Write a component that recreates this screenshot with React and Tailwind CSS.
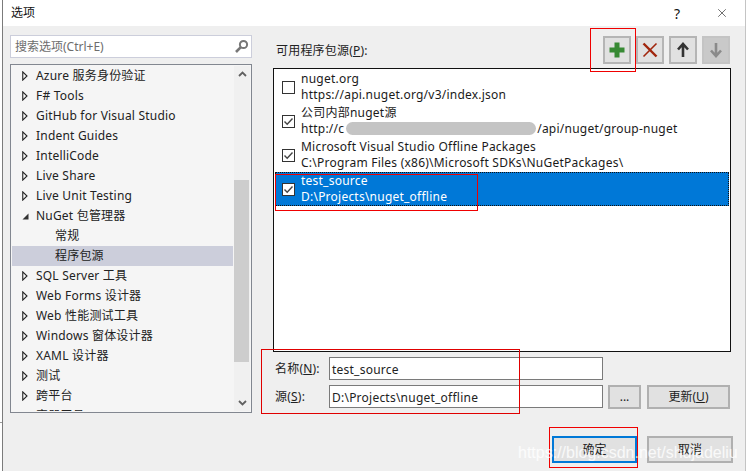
import { X } from "lucide-react";

const font = { fontFamily: '"Noto Sans", "Noto Sans CJK SC", sans-serif' };

const treeItems = [
  { label: "Azure 服务身份验证" },
  { label: "F# Tools" },
  { label: "GitHub for Visual Studio" },
  { label: "Indent Guides" },
  { label: "IntelliCode" },
  { label: "Live Share" },
  { label: "Live Unit Testing" },
  { label: "NuGet 包管理器", open: true },
  { label: "常规", child: true },
  { label: "程序包源", child: true, selected: true },
  { label: "SQL Server 工具" },
  { label: "Web Forms 设计器" },
  { label: "Web 性能测试工具" },
  { label: "Windows 窗体设计器" },
  { label: "XAML 设计器" },
  { label: "测试" },
  { label: "跨平台" },
  { label: "容器工具", open: true },
];

const sources = [
  { name: "nuget.org", url: "https://api.nuget.org/v3/index.json", checked: false },
  { name: "公司内部nuget源", url: "http://c", urlEnd: "/api/nuget/group-nuget", checked: true },
  { name: "Microsoft Visual Studio Offline Packages", url: "C:\\Program Files (x86)\\Microsoft SDKs\\NuGetPackages\\", checked: true },
  { name: "test_source", url: "D:\\Projects\\nuget_offline", checked: true, selected: true },
];

function Arrow({ open }) {
  if (open) {
    return (
      <svg width="7" height="7" viewBox="0 0 7 7" className="shrink-0">
        <path d="M0.5 6.5H6.5V0.5Z" fill="#333" />
      </svg>
    );
  }
  return (
    <svg width="6" height="10" viewBox="0 0 6 10" className="shrink-0">
      <path d="M0.75 0.9L5 5L0.75 9.1Z" fill="none" stroke="#222" strokeWidth="1.1" />
    </svg>
  );
}

function TreeRow({ item }) {
  return (
    <div className={`flex h-5 items-center shrink-0 text-[12px] text-[#222] tracking-[0.2px] ${item.selected ? "bg-[#ccceDB]" : ""} ${item.child ? "pl-[43px]" : "pl-[10px]"}`}>
      {!item.child && <div className="w-[14px] flex items-center"><Arrow open={item.open} /></div>}
      <span className="whitespace-nowrap">{item.label}</span>
    </div>
  );
}

function Check({ checked }) {
  return (
    <div className="w-[13px] h-[13px] border border-[#333] bg-white flex items-center justify-center shrink-0">
      {checked && (
        <svg width="11" height="11" viewBox="0 0 11 11">
          <path d="M1.5 5.5L4.2 8.3L9.5 2.5" fill="none" stroke="#444" strokeWidth="1.4" />
        </svg>
      )}
    </div>
  );
}

function SourceRow({ s }) {
  return (
    <div className={`relative flex items-center h-[34px] pl-[7px] ${s.selected ? "bg-[#0078d7] text-white outline-1 outline-dotted outline-offset-[-1px] outline-[#111]" : "text-[#1a1a1a]"}`}>
      <Check checked={s.checked} />
      <div className="ml-[6px] text-[12px] leading-[16px] tracking-[0.23px] whitespace-nowrap">
        <div>{s.name}</div>
        <div className="flex">
          <span>{s.url}</span>
          {s.urlEnd && (
            <>
              <span className="relative w-[193px] shrink-0">
                <span className="absolute left-[2px] right-[1px] top-[1px] h-[13px] rounded-full bg-[#c4c4c4]" />
              </span>
              <span>{s.urlEnd}</span>
            </>
          )}
        </div>
      </div>
    </div>
  );
}

function IconBtn({ children, disabled }) {
  return (
    <button className={`w-7 h-7 border-2 flex items-center justify-center ${disabled ? "bg-[#c9c9c9] border-[#c4c4c4]" : "bg-[#e1e1e1] border-[#b5b5b5]"}`}>
      {children}
    </button>
  );
}

function Btn({ children, className = "" }) {
  return (
    <button className={`bg-[#e1e1e1] border-2 border-[#b0b0b0] text-[12px] text-[#222] ${className}`}>
      {children}
    </button>
  );
}

function Field({ label, hotkey, tail, value }) {
  return (
    <div className="flex items-center h-[23px]">
      <div className="w-[54px] pt-px text-[12px] text-[#222] tracking-[0.2px]">
        {label}(<span className="underline">{hotkey}</span>){tail}
      </div>
      <div className="w-[274px] h-[23px] border border-[#7a7a7a] bg-white text-[12px] leading-[23px] pl-[2px] tracking-[0.23px] text-[#222]">{value}</div>
    </div>
  );
}

export default function App() {
  return (
    <div style={font} className="relative w-[746px] h-[471px] overflow-hidden bg-[#efefef] flex flex-col">
      <div className="h-[26px] shrink-0 bg-white flex items-center pl-[11px] text-[12px] text-[#111]">
        <span>选项</span>
        <span className="ml-auto text-[14px] mr-[35px]">?</span>
        <X size={14} strokeWidth={1.1} className="mr-[17px] text-[#222]" />
      </div>

      <div className="flex flex-1 pl-[10px] pt-[9px] min-h-0">
        {/* left column */}
        <div className="w-[242px] shrink-0 flex flex-col">
          <div className="h-[23px] bg-white border border-[#ccceDB] flex items-center pl-[4px] pr-[2px] text-[12px] text-[#6d6d6d]">
            <span>搜索选项(Ctrl+E)</span>
            <svg width="15" height="15" viewBox="0 0 15 15" className="ml-auto">
              <circle cx="9.5" cy="5.5" r="3.6" fill="none" stroke="#777" strokeWidth="2" />
              <path d="M6.8 8.2L2 13" stroke="#777" strokeWidth="2.6" />
            </svg>
          </div>
          <div className="mt-[6px] h-[349px] border border-[#828790] bg-[#f5f5f5] flex p-px">
            <div className="flex-1 min-w-0 flex flex-col overflow-hidden pr-[1px]">
              {treeItems.map((item) => <TreeRow key={item.label} item={item} />)}
            </div>
            <div className="w-[16px] shrink-0 flex flex-col bg-[#f0f0f0]">
              <div className="h-[16px] flex items-center justify-center">
                <svg width="9" height="6" viewBox="0 0 9 6"><path d="M1 5L4.5 1.5L8 5" fill="none" stroke="#606060" strokeWidth="1.8" /></svg>
              </div>
              <div className="mt-[98px] h-[182px] w-[15px] bg-[#cdcdcd]" />
              <div className="mt-auto h-[16px] flex items-center justify-center">
                <svg width="9" height="6" viewBox="0 0 9 6"><path d="M1 1L4.5 4.5L8 1" fill="none" stroke="#606060" strokeWidth="1.8" /></svg>
              </div>
            </div>
          </div>
        </div>

        {/* right column */}
        <div className="ml-[21px] w-[461px] shrink-0 flex flex-col">
          <div className="h-[29px] flex items-start">
            <span className="ml-[3px] mt-[7px] text-[12px] text-[#222] leading-[18px] tracking-[0.2px]">可用程序包源(<span className="underline">P</span>):</span>
            <div className="ml-auto mr-[4px] mt-px flex gap-[5px]">
              <IconBtn>
                <svg width="18" height="18" viewBox="0 0 18 18"><path d="M9 1.5V16.5M1.5 9H16.5" stroke="#388a34" strokeWidth="5" /></svg>
              </IconBtn>
              <IconBtn>
                <svg width="16" height="16" viewBox="0 0 16 16"><path d="M1.5 1.5L14.5 14.5" stroke="#a1260d" strokeWidth="2.4" /><path d="M14.5 1.5L1.5 14.5" stroke="#a1260d" strokeWidth="1.6" /></svg>
              </IconBtn>
              <IconBtn>
                <svg width="14" height="16" viewBox="0 0 14 16"><path d="M7 15V3M2 7.5L7 2L12 7.5" fill="none" stroke="#333" strokeWidth="2.6" /></svg>
              </IconBtn>
              <IconBtn disabled>
                <svg width="14" height="16" viewBox="0 0 14 16"><path d="M7 1V13M2 8.5L7 14L12 8.5" fill="none" stroke="#8a8a8a" strokeWidth="2.6" /></svg>
              </IconBtn>
            </div>
          </div>
          <div className="mt-[4px] mr-[3px] h-[284px] border border-[#111] bg-white flex flex-col pt-[1px] pl-[1px] pr-[1px]">
            {sources.map((s) => <SourceRow key={s.name} s={s} />)}
          </div>
          <div className="mt-[5px] ml-[2px] flex flex-col gap-[5px] relative">
            <Field label="名称" hotkey="N" tail=":" value="test_source" />
            <div className="flex items-start">
              <Field label="源" hotkey="S" tail=":" value="D:\Projects\nuget_offline" />
              <Btn className="ml-[5px] w-[33px] h-6">...</Btn>
              <Btn className="ml-[6px] w-[83px] h-6">更新(<span className="underline">U</span>)</Btn>
            </div>
          </div>
          <div className="mt-[27px] flex">
            <button className="ml-[279px] w-[85px] h-[27px] bg-[#e1e1e1] border-[2px] border-[#0078d7] text-[12px] text-[#222]">确定</button>
            <Btn className="ml-[10px] w-[86px] h-[27px]">取消</Btn>
          </div>
        </div>
      </div>

      {/* window edge */}
      <div className="absolute left-0 top-0 w-[2px] h-full bg-white" />
      <div className="absolute left-[2px] top-0 w-px h-full bg-[#7b7b7b]" />
      <div className="absolute left-0 top-[422px] w-[2px] h-px bg-[#9a9a9a]" />
      <div className="absolute right-0 top-0 w-px h-full bg-[#c4c4c4]" />

      {/* annotations drawn over the screenshot */}
      <div className="absolute left-[590px] top-[28px] w-[46px] h-[44px] border border-[#f00000]" />
      <div className="absolute left-[275px] top-[174px] w-[203px] h-[37px] border border-[#f00000]" />
      <div className="absolute left-[261px] top-[349px] w-[259px] h-[65px] border border-[#e00000]" />
      <div className="absolute left-[549px] top-[427px] w-[89px] h-[41px] border border-[#f00000]" />

      {/* blog watermark */}
      <div className="absolute left-[518px] top-[441px] text-[16px] text-white/80 whitespace-nowrap" style={{ fontFamily: '"Liberation Sans", sans-serif' }}>
        https://blog.csdn.net/shujadeliu
      </div>
    </div>
  );
}
